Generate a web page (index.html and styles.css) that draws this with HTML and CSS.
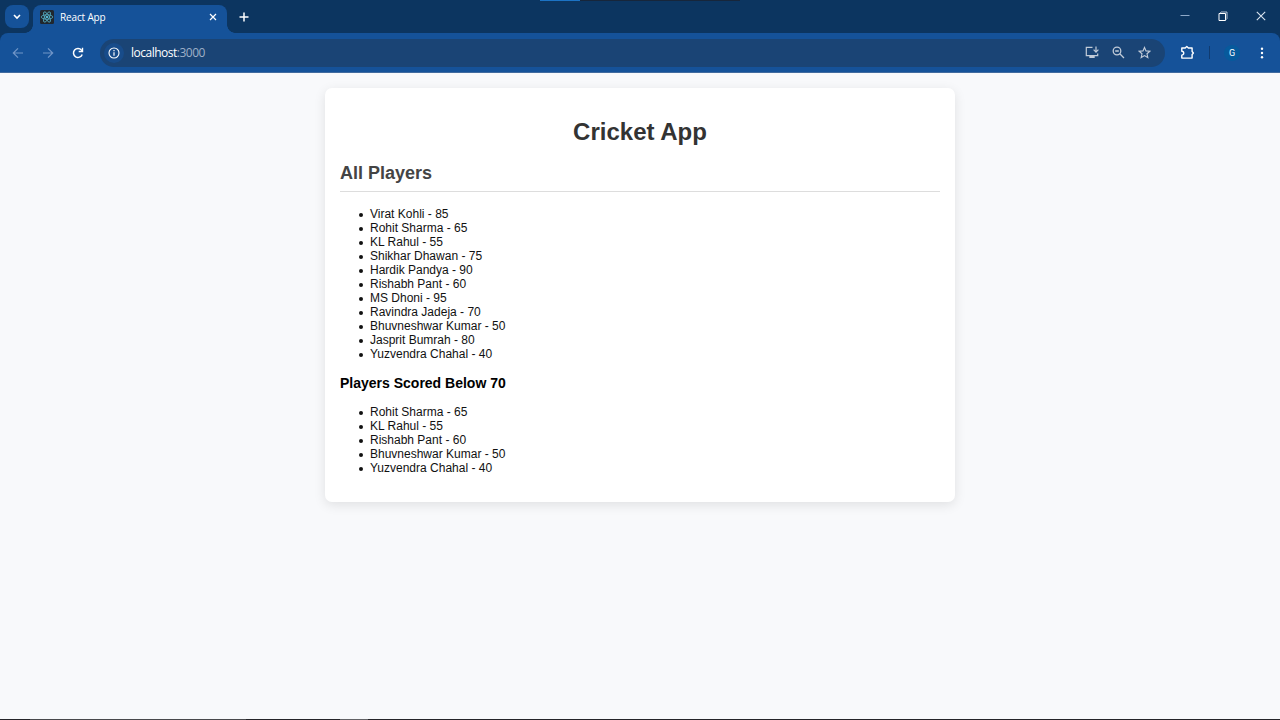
FILE: index.html
```html
<!DOCTYPE html>
<html lang="en">
<head>
<meta charset="utf-8">
<title>React App</title>
<link rel="stylesheet" href="styles.css">
</head>
<body>
<header class="browser">
  <div class="titlebar">
    <span class="tab-search"><svg width="10" height="8" viewBox="0 0 10 8"><path d="m2 2 3 3 3-3" fill="none" stroke="#fff" stroke-width="1.6"/></svg></span>
    <div class="tab">
      <svg class="favicon" width="14" height="14" viewBox="0 0 14 14"><rect width="14" height="14" rx="1.5" fill="#20272e"/><g fill="none" stroke="#58b9cf" stroke-width=".75"><ellipse cx="7" cy="7" rx="5.8" ry="2.2"/><ellipse cx="7" cy="7" rx="5.8" ry="2.2" transform="rotate(60 7 7)"/><ellipse cx="7" cy="7" rx="5.8" ry="2.2" transform="rotate(120 7 7)"/></g><circle cx="7" cy="7" r="1.1" fill="#61dafb"/></svg>
      <span class="tab-title">React App</span>
      <svg class="tab-close" width="8" height="8" viewBox="0 0 8 8"><path d="m1 1 6 6m0-6-6 6" stroke="#fff" stroke-width="1.2"/></svg>
    </div>
    <svg class="new-tab" width="10" height="10" viewBox="0 0 10 10"><path d="M5 .5v9M.5 5h9" stroke="#fff" stroke-width="1.5"/></svg>
    <div class="window-controls">
      <svg width="10" height="10" viewBox="0 0 10 10"><path d="M.5 4.5h9" stroke="#8ea9c9"/></svg>
      <svg width="10" height="10" viewBox="0 0 10 10"><path d="M1 2.500h6.500v7H1z" fill="none" stroke="#fff"/><path d="M2.500 2.500V1.500l.5-.5H9v6.500l-.5.8h-1" fill="none" stroke="#dbe5f0" stroke-width=".8"/></svg>
      <svg width="10" height="10" viewBox="0 0 10 10"><path d="m.8.8 8.400 8.400m0-8.400L.8 9.200" stroke="#dbe5f0" stroke-width="1.1"/></svg>
    </div>
    <span class="top-strip"></span>
  </div>
  <div class="toolbar">
    <div class="nav">
      <svg width="12" height="12" viewBox="0 0 12 12"><path d="M11 6H1.500M6 1.300 1.300 6 6 10.700" fill="none" stroke="#7196c8" stroke-width="1.2"/></svg>
      <svg width="12" height="12" viewBox="0 0 12 12"><path d="M1 6h9.500M6 1.300 10.700 6 6 10.700" fill="none" stroke="#7196c8" stroke-width="1.2"/></svg>
      <svg width="12" height="12" viewBox="0 0 12 12"><path d="M10.200 7.500A4.500 4.500 0 1 1 9.500 3.100L10.500 4.300" fill="none" stroke="#fff" stroke-width="1.500"/><path d="M11.200.7v4.500H6.700V3.800h3.100V.7z" fill="#fff"/></svg>
    </div>
    <div class="address">
      <span class="site-info"><svg width="12" height="12" viewBox="0 0 12 12"><circle cx="6" cy="6" r="5" fill="none" stroke="#fff" stroke-width="1.100"/><path d="M6 5.200v3.600M6 3v1.300" stroke="#fff" stroke-width="1.200"/></svg></span>
      <span class="url">localhost<span class="port">:3000</span></span>
      <div class="page-actions">
        <svg width="14" height="13" viewBox="0 0 14 13"><path d="M7.500 1.300H1.300v8.400h11.400V7.500" fill="none" stroke="#c1cbd8" stroke-width="1.200"/><path d="M4.300 10h5.400v2H4.300z" fill="#c1cbd8"/><path d="M11 .5v5.300M8.600 3.700 11 6.100l2.400-2.400" fill="none" stroke="#c1cbd8" stroke-width="1.200"/></svg>
        <svg width="13" height="13" viewBox="0 0 13 13"><circle cx="5" cy="5" r="3.800" fill="none" stroke="#c1cbd8" stroke-width="1.300"/><path d="m7.800 7.800 4.200 4.200M3.200 5h3.600" stroke="#c1cbd8" stroke-width="1.300"/></svg>
        <svg width="13" height="13" viewBox="0 0 13 13"><path d="m6.500 1.500 1.500 3.400 3.800.4L9 7.800l.8 3.700-3.300-1.900-3.300 1.900L4 7.800 1.200 5.300 5 4.900z" fill="none" stroke="#c1cbd8" stroke-width="1.150"/></svg>
      </div>
    </div>
    <svg class="extensions" width="15" height="15" viewBox="0 0 15 15"><path d="M1.800 3H5.200L6.800 1.500 8.400 3h3.700v3.500l1.300 1.500-1.300 1.500v3.600H1.800v-3a1.900 1.900 0 0 0 0-3.900z" fill="none" stroke="#fff" stroke-width="1.400" stroke-linejoin="round"/></svg>
    <span class="divider"></span>
    <span class="avatar">G</span>
    <svg class="menu" width="4" height="12" viewBox="0 0 4 12"><g fill="#fff"><circle cx="2" cy="1.700" r="1.200"/><circle cx="2" cy="6" r="1.200"/><circle cx="2" cy="10.300" r="1.200"/></g></svg>
  </div>
</header>
<main class="page">
  <section class="card">
    <h1 class="title">Cricket App</h1>
    <h2 class="section-title">All Players</h2>
    <ul class="players">
      <li>Virat Kohli - 85</li>
      <li>Rohit Sharma - 65</li>
      <li>KL Rahul - 55</li>
      <li>Shikhar Dhawan - 75</li>
      <li>Hardik Pandya - 90</li>
      <li>Rishabh Pant - 60</li>
      <li>MS Dhoni - 95</li>
      <li>Ravindra Jadeja - 70</li>
      <li>Bhuvneshwar Kumar - 50</li>
      <li>Jasprit Bumrah - 80</li>
      <li>Yuzvendra Chahal - 40</li>
    </ul>
    <h3 class="subtitle">Players Scored Below 70</h3>
    <ul class="players">
      <li>Rohit Sharma - 65</li>
      <li>KL Rahul - 55</li>
      <li>Rishabh Pant - 60</li>
      <li>Bhuvneshwar Kumar - 50</li>
      <li>Yuzvendra Chahal - 40</li>
    </ul>
  </section>
</main>
<footer class="bottom-edge"></footer>
</body>
</html>
```
FILE: styles.css
```css
* { box-sizing: border-box; }
body {
  margin: 0;
  height: 720px;
  display: flex;
  flex-direction: column;
  overflow: hidden;
  background: #f8f9fb;
  font-family: "Liberation Sans", Arial, sans-serif;
}
svg { display: block; flex: none; }
.browser {
  height: 73px;
  flex: none;
  background: #0c3560;
  color: #fff;
  font-family: "Open Sans", "Noto Sans", sans-serif;
}
.titlebar {
  position: relative;
  height: 33px;
  display: flex;
  padding-left: 5px;
}
.tab-search {
  width: 24px;
  height: 23px;
  margin-top: 5px;
  border-radius: 8px;
  background: #155299;
  display: grid;
  place-items: center;
}
.tab {
  position: relative;
  width: 194px;
  height: 28px;
  margin: 5px 0 0 4px;
  padding: 0 10px 4px 7px;
  border-radius: 8px 8px 0 0;
  background: #155299;
  display: flex;
  align-items: center;
}
.tab::before,
.tab::after {
  content: "";
  position: absolute;
  bottom: 0;
  width: 8px;
  height: 8px;
}
.tab::before {
  left: -8px;
  background: radial-gradient(circle at 0 0, transparent 7.5px, #155299 8px);
}
.tab::after {
  right: -8px;
  background: radial-gradient(circle at 100% 0, transparent 7.5px, #155299 8px);
}
.tab-title {
  margin-left: 6px;
  font-size: 10px;
  line-height: 14px;
  letter-spacing: -0.15px;
  white-space: nowrap;
}
.tab-close { margin-left: auto; }
.new-tab { margin: 12px 0 0 12px; }
.window-controls {
  display: flex;
  gap: 28px;
  margin: 11px 14px 0 auto;
}
.top-strip {
  position: absolute;
  left: 540px;
  top: 0;
  width: 200px;
  height: 1px;
  background: linear-gradient(90deg, #1c73c4 40px, #17263b 40px);
}
.toolbar {
  height: 40px;
  display: flex;
  align-items: center;
  padding: 0 16px 0 12px;
  background: #155299;
  border-bottom: 1px solid #416b9f;
  border-radius: 8px 8px 0 0;
}
.nav {
  display: flex;
  gap: 18px;
}
.address {
  width: 1065px;
  height: 28px;
  margin-left: 16px;
  padding: 0 14px 0 4px;
  border-radius: 14px;
  background: #1a4475;
  display: flex;
  align-items: center;
}
.site-info {
  width: 20px;
  height: 20px;
  border-radius: 50%;
  background: #184c8a;
  display: grid;
  place-items: center;
}
.url {
  margin-left: 7px;
  font-size: 12px;
  line-height: 18px;
  letter-spacing: -0.5px;
}
.port { color: #9eb0c7; }
.page-actions {
  display: flex;
  align-items: center;
  gap: 13px;
  margin-left: auto;
}
.extensions { margin-left: 15px; }
.divider {
  width: 1px;
  height: 13px;
  margin-left: 14px;
  background: #103b70;
}
.avatar {
  width: 16px;
  height: 16px;
  margin-left: 14px;
  border-radius: 50%;
  background: #075a9c;
  font: 9px/16px Roboto, sans-serif;
  text-align: center;
}
.menu { margin-left: auto; }
.page {
  flex: 1;
  padding-top: 15px;
}
.card {
  width: 630px;
  height: 414px;
  margin: 0 auto;
  padding: 30px 15px 0;
  border-radius: 7px;
  background: #fff;
  box-shadow: 0 3px 12px rgba(0, 0, 0, 0.1);
}
.title {
  margin: 0 0 17px;
  color: #333;
  font-size: 24px;
  line-height: 27px;
  text-align: center;
}
.section-title {
  height: 30px;
  margin: 0;
  border-bottom: 1px solid #ddd;
  color: #444;
  font-size: 18px;
  line-height: 22px;
}
.players {
  margin: 15px 0 0;
  padding-left: 30px;
  list-style: none;
  color: #111;
  font-size: 12px;
  line-height: 14px;
}
.players li::before {
  content: "";
  display: inline-block;
  width: 4px;
  height: 4px;
  margin: 0 7px 0 -11px;
  border-radius: 50%;
  background: #111;
  vertical-align: 1px;
}
.subtitle {
  margin: 14px 0 0;
  color: #000;
  font-size: 14px;
  line-height: 16px;
}
.subtitle + .players { margin-top: 14px; }
.bottom-edge {
  height: 1px;
  flex: none;
  background: linear-gradient(90deg, #242428 30px, #48484b 30px, #48484b 246px, #242428 246px, #242428 340px, #626265 340px, #626265 368px, #242428 368px);
}
```
